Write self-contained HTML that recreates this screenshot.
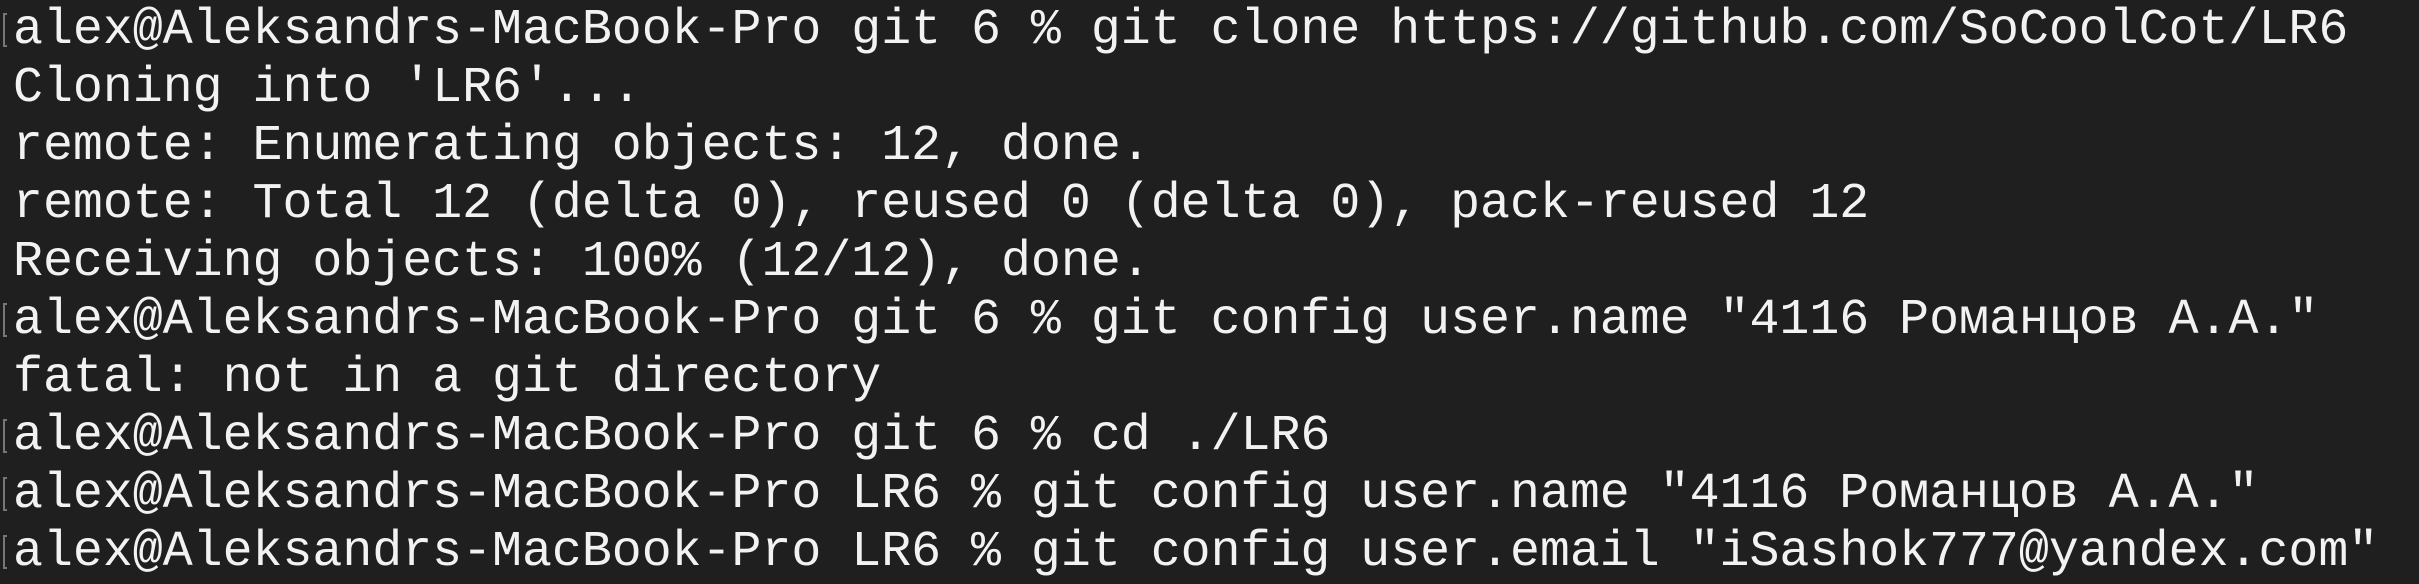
<!DOCTYPE html>
<html><head><meta charset="utf-8">
<style>
html,body{margin:0;padding:0;background:#1f1f1f;}
body{width:2419px;height:584px;overflow:hidden;position:relative;}
pre{margin:0;padding:1px 0 0 13px;font-family:"Liberation Mono","DejaVu Sans Mono",monospace;font-size:49.9px;line-height:58px;color:#f2f2f2;white-space:pre;}
.b{position:absolute;left:3px;width:4px;height:34px;border:2px solid #777;border-right:none;box-sizing:border-box;}
</style></head><body>
<div class="b" style="top:13px"></div>
<div class="b" style="top:303px"></div>
<div class="b" style="top:419px"></div>
<div class="b" style="top:477px"></div>
<div class="b" style="top:535px"></div>
<pre>alex@Aleksandrs-MacBook-Pro git 6 % git clone https://github.com/SoCoolCot/LR6
Cloning into 'LR6'...
remote: Enumerating objects: 12, done.
remote: Total 12 (delta 0), reused 0 (delta 0), pack-reused 12
Receiving objects: 100% (12/12), done.
alex@Aleksandrs-MacBook-Pro git 6 % git config user.name "4116 Романцов А.А."
fatal: not in a git directory
alex@Aleksandrs-MacBook-Pro git 6 % cd ./LR6
alex@Aleksandrs-MacBook-Pro LR6 % git config user.name "4116 Романцов А.А."
alex@Aleksandrs-MacBook-Pro LR6 % git config user.email "iSashok777@yandex.com"</pre>
</body></html>
